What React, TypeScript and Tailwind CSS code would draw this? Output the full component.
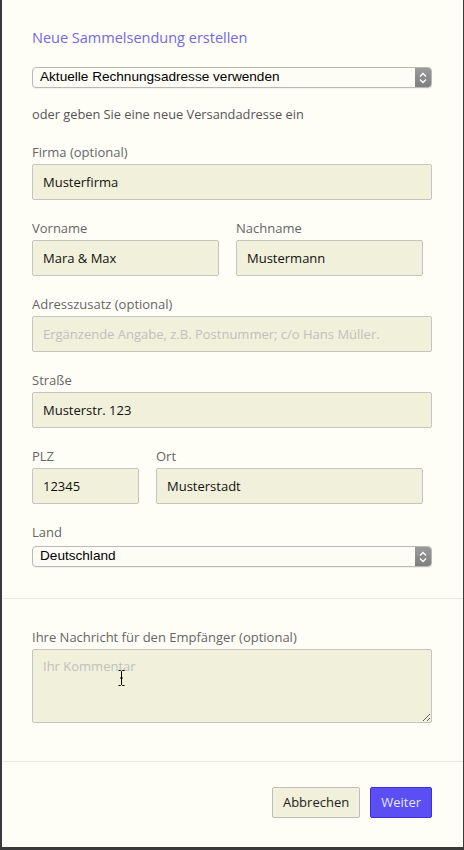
import type { ReactNode } from "react";

const font = { fontFamily: '"Open Sans", "Noto Sans", sans-serif' };

function Label({ children }: { children: ReactNode }) {
  return (
    <div className="mb-[3px] text-[13px] leading-[18px] text-[#666]">
      {children}
    </div>
  );
}

function TextInput({
  value,
  placeholder,
  className = "",
}: {
  value?: string;
  placeholder?: string;
  className?: string;
}) {
  return (
    <input
      readOnly
      value={value ?? ""}
      placeholder={placeholder}
      className={`h-[36px] rounded-[2px] border border-[#c4c4c0] bg-[#f1f0da] px-[10px] text-[13px] text-[#111] outline-none placeholder:text-[#c0c0c0] ${className}`}
      style={font}
    />
  );
}

function MacSelect({ value }: { value: string }) {
  return (
    <div className="flex h-[21px] w-full overflow-hidden rounded-[4px] border border-[#b9b9b9] bg-[#fdfdf6] shadow-[0_1px_0_rgba(0,0,0,0.05)]">
      <div
        className="flex flex-1 items-center pl-[7px] text-[13.6px] text-black"
        style={{ fontFamily: '"Liberation Sans", Arial, sans-serif' }}
      >
        {value}
      </div>
      <div className="flex w-[16px] items-center justify-center bg-gradient-to-b from-[#9a9a9a] to-[#7f7f7f]">
        <svg width="8" height="12" viewBox="0 0 8 12" fill="none">
          <path
            d="M1 4.5 L4 1.5 L7 4.5 M1 7.5 L4 10.5 L7 7.5"
            stroke="#fff"
            strokeWidth="1.3"
          />
        </svg>
      </div>
    </div>
  );
}

export default function App() {
  return (
    <div
      className="relative h-[850px] w-[464px] overflow-hidden border-b-[3px] border-l-2 border-r border-[#3a3a3a] bg-[#fefef7]"
      style={font}
    >
      <div className="pl-[30px] pr-[31px] pt-[28px]">
        <h1 className="text-[14.5px] leading-[20px] text-[#7468e0]">
          Neue Sammelsendung erstellen
        </h1>

        <div className="mt-[19px]">
          <MacSelect value="Aktuelle Rechnungsadresse verwenden" />
        </div>

        <p className="mt-[17px] text-[12.8px] leading-[18px] text-[#555]">
          oder geben Sie eine neue Versandadresse ein
        </p>

        <div className="mt-[20px]">
          <Label>Firma (optional)</Label>
          <TextInput value="Musterfirma" className="w-full" />
        </div>

        <div className="mt-[19px] flex gap-[17px]">
          <div>
            <Label>Vorname</Label>
            <TextInput value="Mara & Max" className="w-[187px]" />
          </div>
          <div>
            <Label>Nachname</Label>
            <TextInput value="Mustermann" className="w-[187px]" />
          </div>
        </div>

        <div className="mt-[19px]">
          <Label>Adresszusatz (optional)</Label>
          <TextInput
            placeholder="Ergänzende Angabe, z.B. Postnummer; c/o Hans Müller."
            className="w-full"
          />
        </div>

        <div className="mt-[19px]">
          <Label>Straße</Label>
          <TextInput value="Musterstr. 123" className="w-full" />
        </div>

        <div className="mt-[19px] flex gap-[17px]">
          <div>
            <Label>PLZ</Label>
            <TextInput value="12345" className="w-[107px]" />
          </div>
          <div>
            <Label>Ort</Label>
            <TextInput value="Musterstadt" className="w-[267px]" />
          </div>
        </div>

        <div className="mt-[19px]">
          <Label>Land</Label>
          <div className="mt-[5px]">
            <MacSelect value="Deutschland" />
          </div>
        </div>
      </div>

      <div className="mt-[31px] border-t border-[#e8e8e0]" />

      <div className="pl-[30px] pr-[31px] pt-[29px]">
        <Label>Ihre Nachricht für den Empfänger (optional)</Label>
        <div className="relative">
          <textarea
            readOnly
            placeholder="Ihr Kommentar"
            className="block h-[74px] w-full resize rounded-[2px] border border-[#c4c4c0] bg-[#f1f0da] px-[10px] py-[7px] text-[13px] outline-none placeholder:text-[#c0c0c0]"
            style={font}
          />
          <svg
            className="absolute left-[86px] top-[21px]"
            width="7"
            height="16"
            viewBox="0 0 7 16"
          >
            <path
              d="M0.5 0.5 H2.5 L3.5 1.5 L4.5 0.5 H6.5 M3.5 1.5 V14.5 M0.5 15.5 H2.5 L3.5 14.5 L4.5 15.5 H6.5 M2 8 H5"
              stroke="#000"
              strokeWidth="1"
              fill="none"
            />
          </svg>
        </div>
      </div>

      <div className="mt-[38px] border-t border-[#e8e8e0]" />

      <div className="flex justify-end gap-[10px] pl-[30px] pr-[31px] pt-[25px]">
        <button className="h-[31px] rounded-[2px] border border-[#bdbdbd] bg-[#f1f0da] px-[10px] text-[13px] text-[#222]">
          Abbrechen
        </button>
        <button className="h-[31px] rounded-[2px] border border-[#3b2fd6] bg-[#5b4ef2] px-[10px] text-[13px] text-[#e8e6ff]">
          Weiter
        </button>
      </div>
    </div>
  );
}
